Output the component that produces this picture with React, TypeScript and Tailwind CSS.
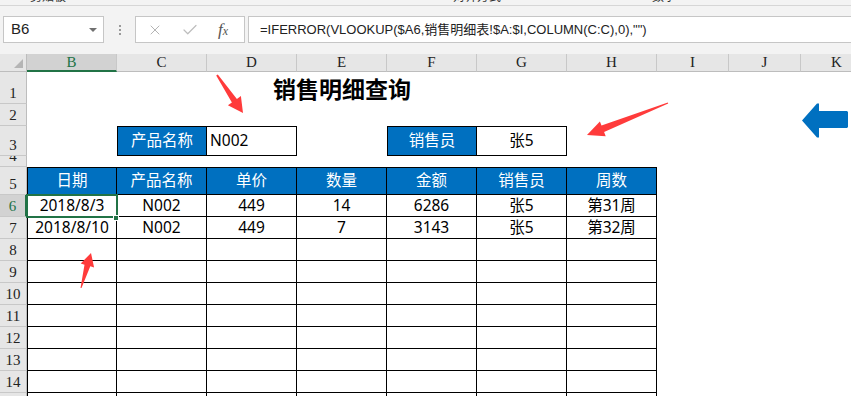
import { X, Check } from "lucide-react";

const COLS = ["B", "C", "D", "E", "F", "G", "H", "I", "J", "K"];

const HEADERS = ["日期", "产品名称", "单价", "数量", "金额", "销售员", "周数"];

const DATA: string[][] = [
  ["2018/8/3", "N002", "449", "14", "6286", "张5", "第31周"],
  ["2018/8/10", "N002", "449", "7", "3143", "张5", "第32周"],
];

function RowHead({ n, active }: { n: number; active?: boolean }) {
  return (
    <div
      className={`flex items-end justify-center overflow-hidden border-b border-[#c8c8c8] pb-[2px] font-['Liberation_Serif',serif] text-[15px] leading-none ${
        active
          ? "border-r-2 border-r-[#217346] bg-[#d2d2d2] text-[#217346]"
          : "border-r border-r-[#bdbdbd] bg-[#e6e6e6] text-[#222]"
      }`}
    >
      {n}
    </div>
  );
}

function ColHead({ label, active }: { label: string; active?: boolean }) {
  return (
    <div
      className={`flex items-center justify-center border-r border-[#c8c8c8] font-['Liberation_Serif',serif] text-[15px] leading-none ${
        active
          ? "border-b-2 border-b-[#217346] bg-[#d2d2d2] text-[#217346]"
          : "border-b border-b-[#bdbdbd] bg-[#e6e6e6] text-[#222]"
      }`}
    >
      {label}
    </div>
  );
}

function Cell({
  children,
  head,
  first,
  top,
  selected,
}: {
  children?: React.ReactNode;
  head?: boolean;
  first?: boolean;
  top?: boolean;
  selected?: boolean;
}) {
  return (
    <div
      className={`relative flex items-center justify-center border-r border-b border-black leading-none ${
        head ? "bg-[#0070c0] text-white" : "bg-white text-black"
      } ${first ? "border-l" : ""} ${top ? "border-t" : ""}`}
    >
      {children}
      {selected && (
        <>
          <div className="pointer-events-none absolute -top-[1px] -left-[2px] -right-[2px] -bottom-[2px] z-10 border-2 border-[#217346]" />
          <div className="absolute -right-[3px] -bottom-[5px] z-20 h-[6px] w-[6px] border border-white bg-[#217346]" />
        </>
      )}
    </div>
  );
}

function Blank({ n }: { n: number }) {
  return (
    <>
      {Array.from({ length: n }).map((_, i) => (
        <div key={i} />
      ))}
    </>
  );
}

function FormulaBar() {
  return (
    <>
      <div className="flex h-[6px] overflow-hidden border-b border-[#d6d6d6] text-[12px] leading-[12px] text-[#333]">
        <span className="-mt-[9px] ml-[30px] shrink-0">剪贴板</span>
        <span className="-mt-[9px] ml-[387px] shrink-0">对齐方式</span>
        <span className="-mt-[9px] ml-[151px] shrink-0">数字</span>
      </div>
      <div className="flex h-[48px] items-start pt-[10px]">
        <div className="ml-[3px] flex h-[27px] w-[101px] items-center border border-[#c6c6c6] bg-white pl-[7px] pr-[6px] text-[15px] text-[#222]">
          <span>B6</span>
          <span className="ml-auto h-0 w-0 border-x-[4px] border-t-[4px] border-x-transparent border-t-[#707070]" />
        </div>
        <div className="flex h-[27px] w-[31px] flex-col items-center justify-center gap-[2px]">
          <span className="h-[2px] w-[2px] bg-[#9a9a9a]" />
          <span className="h-[2px] w-[2px] bg-[#9a9a9a]" />
          <span className="h-[2px] w-[2px] bg-[#9a9a9a]" />
        </div>
        <div className="flex h-[27px] w-[110px] items-center border border-[#c6c6c6] bg-white">
          <X size={16} strokeWidth={1.3} className="ml-[11px] text-[#a8a8a8]" />
          <Check size={18} strokeWidth={1.6} className="ml-[18px] text-[#bdbdbd]" />
          <span className="ml-[19px] font-['Liberation_Serif',serif] text-[17px] italic text-[#555]">
            f<span className="text-[12px]">x</span>
          </span>
        </div>
        <div className="ml-[3px] flex h-[27px] flex-1 items-center border-y border-l border-[#c6c6c6] bg-white pl-[11px] text-[13px] text-[#222]">
          =IFERROR(VLOOKUP($A6,销售明细表!$A:$I,COLUMN(C:C),0),"")
        </div>
      </div>
    </>
  );
}

function Sheet() {
  return (
    <div className="grid w-[873px] grid-cols-[27px_repeat(7,90px)_72px_72px_72px] grid-rows-[18px_32px_22px_30px_11px_28px_repeat(10,22px)] bg-white font-['Noto_Sans','Noto_Sans_CJK_SC',sans-serif] text-[15.5px]">
      {/* column headers */}
      <div className="relative border-r border-b border-[#bdbdbd] bg-[#e6e6e6]">
        <svg className="absolute inset-0" width="27" height="18">
          <polygon points="23,5 23,14 14,14" fill="#b5b5b5" />
        </svg>
      </div>
      {COLS.map((c) => (
        <ColHead key={c} label={c} active={c === "B"} />
      ))}

      {/* row 1 */}
      <RowHead n={1} />
      <Blank n={2} />
      <div className="col-span-3 flex items-center justify-center pt-[1px] font-['Noto_Sans_CJK_SC',sans-serif] text-[23px] font-bold text-black">
        销售明细查询
      </div>
      <Blank n={5} />

      {/* row 2 */}
      <RowHead n={2} />
      <Blank n={10} />

      {/* row 3 */}
      <RowHead n={3} />
      <div />
      <div className="flex items-center justify-center border border-black bg-[#0070c0] text-white">产品名称</div>
      <div className="flex items-center border-y border-r border-black pl-[3px]">N002</div>
      <div />
      <div className="flex items-center justify-center border border-black bg-[#0070c0] text-white">销售员</div>
      <div className="flex items-center justify-center border-y border-r border-black">张5</div>
      <Blank n={4} />

      {/* row 4 */}
      <RowHead n={4} />
      <Blank n={10} />

      {/* row 5 headers */}
      <RowHead n={5} />
      {HEADERS.map((h, i) => (
        <Cell key={h} head top first={i === 0}>
          {h}
        </Cell>
      ))}
      <Blank n={3} />

      {/* rows 6 - 15 */}
      {Array.from({ length: 10 }).map((_, r) => {
        const row = DATA[r];
        return (
          <div key={r} className="contents">
            <RowHead n={r + 6} active={r === 0} />
            {Array.from({ length: 7 }).map((__, c) => (
              <Cell key={c} first={c === 0} selected={r === 0 && c === 0}>
                {row ? row[c] : null}
              </Cell>
            ))}
            <Blank n={3} />
          </div>
        );
      })}
    </div>
  );
}

function Arrows() {
  return (
    <svg className="pointer-events-none absolute inset-0" width="851" height="396">
      <polygon
        points="216.2,75.6 231.9,102.4 227.9,105.3 243,113 240.9,96.1 236.9,99 217.8,74.4"
        fill="#ff3b3b"
      />
      <polygon
        points="667.8,102.5 601.5,125.5 599.9,121.4 587,135 605.7,136.2 604.1,132.1 668.2,103.5"
        fill="#ff3b3b"
      />
      <polygon
        points="80.5,287.9 84.5,264.7 80.7,263.6 91,253 94.1,267.4 90.3,266.3 81.5,288.1"
        fill="#ff3b3b"
      />
      <polygon
        points="802,120.5 817,103.5 819,103.5 819,111 847,111 848,112 848,127 847,128 819,128 819,137.5 817,137.5"
        fill="#0070c0"
      />
    </svg>
  );
}

export default function App() {
  return (
    <div className="relative h-[396px] w-[851px] overflow-hidden bg-[#f3f3f3] font-['Liberation_Sans','Noto_Sans_CJK_SC',sans-serif]">
      <FormulaBar />
      <Sheet />
      <Arrows />
    </div>
  );
}
